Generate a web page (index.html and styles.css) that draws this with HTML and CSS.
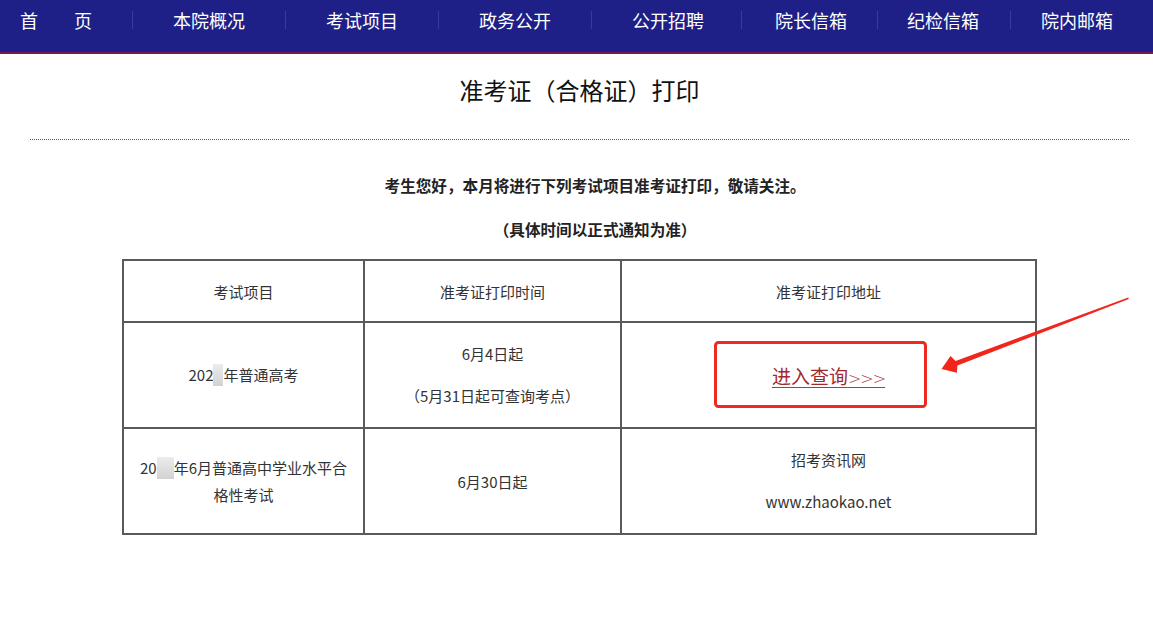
FILE: index.html
```html
<!DOCTYPE html>
<html lang="zh-CN">
<head>
    <meta charset="UTF-8">
    <title>准考证（合格证）打印</title>
    <link rel="stylesheet" href="styles.css">
</head>
<body>
    <div id="nav">
        <ul class="navList">
            <li class="navItem first">首　　页</li>
            <li class="navItem">本院概况</li>
            <li class="navItem">考试项目</li>
            <li class="navItem">政务公开</li>
            <li class="navItem n5">公开招聘</li>
            <li class="navItem n6">院长信箱</li>
            <li class="navItem n7">纪检信箱</li>
            <li class="navItem n8">院内邮箱</li>
        </ul>
    </div>

    <div id="content">
        <h1 class="pageTitle">准考证（合格证）打印</h1>
        <div class="dotLine"></div>

        <p class="notice">考生您好，本月将进行下列考试项目准考证打印，敬请关注。</p>
        <p class="notice">（具体时间以正式通知为准）</p>

        <table class="examTable">
            <tr class="headRow">
                <td class="c1">考试项目</td>
                <td class="c2">准考证打印时间</td>
                <td class="c3">准考证打印地址</td>
            </tr>
            <tr class="bodyRow">
                <td>202<span class="blur"></span>年普通高考</td>
                <td>
                    <p class="cellLine">6月4日起</p>
                    <p class="cellLine">（5月31日起可查询考点）</p>
                </td>
                <td><a class="queryLink" href="#">进入查询<span class="arrows">&gt;&gt;&gt;</span></a></td>
            </tr>
            <tr class="bodyRow">
                <td class="wrapCell">20<span class="blur wide"></span>年6月普通高中学业水平合格性考试</td>
                <td>6月30日起</td>
                <td>
                    <p class="cellLine">招考资讯网</p>
                    <p class="cellLine">www.zhaokao.net</p>
                </td>
            </tr>
        </table>
    </div>

    <!-- screenshot markup: red frame and arrow -->
    <svg class="markup" width="1153" height="621" viewBox="0 0 1153 621">
        <rect x="715.5" y="342.5" width="210" height="64" rx="3" fill="none" stroke="#ec2a20" stroke-width="3"/>
        <polygon fill="#f0261c" points="941.5,369 956.9,372.8 957.4,365.6 1128.8,299 1128.2,297.5 955.6,361 950.5,356"/>
    </svg>
</body>
</html>
```

FILE: styles.css
```css
* {
    margin: 0px;
    padding: 0px;
    border: 0px;
}
body {
    position: relative;
    background-color: #fff;
    font-family: "Noto Sans CJK SC", "Noto Sans", sans-serif;
    color: #222;
    text-spacing-trim: space-all;
}
#nav {
    background-color: #1e2087;
    height: 52px;
    border-bottom: 2px solid #741a4e;
}
.navList {
    list-style: none;
    display: flex;
    padding: 11px 0px 0px 20px;
}
.navItem {
    color: #fff;
    font-size: 18px;
    line-height: 18px;
    height: 18px;
    padding: 0px 40px;
    border-left: 1px solid #3a3c9c;
    white-space: nowrap;
}
.navItem.first {
    padding-left: 0px;
    border-left: 0px;
}
.navItem.n5 {
    padding-right: 37px;
}
.navItem.n6 {
    padding: 0px 30px 0px 33px;
}
.navItem.n7 {
    padding: 0px 31px 0px 29px;
}
.navItem.n8 {
    padding: 0px 0px 0px 30px;
}
#content {
    margin: 0px 24px 0px 30px;
}
.pageTitle {
    margin-top: 21px;
    font-size: 24px;
    line-height: 30px;
    font-weight: normal;
    text-align: center;
    color: #111;
}
.dotLine {
    margin-top: 34px;
    border-top: 1px dotted #555;
}
.notice {
    font-size: 15.6px;
    line-height: 24px;
    font-weight: bold;
    text-align: center;
    text-indent: 2em;
    margin-top: 20px;
}
.notice:first-of-type {
    margin-top: 33px;
}
.examTable {
    margin: 18px auto 0px auto;
    width: 915px;
    border-collapse: collapse;
    border: 2px solid #5a5a5a;
    font-size: 15px;
    color: #333;
}
.examTable td {
    border: 2px solid #5a5a5a;
    text-align: center;
    vertical-align: middle;
    padding: 0px 8px;
}
.headRow td {
    height: 60px;
}
.bodyRow td {
    height: 104px;
}
.c1 {
    width: 223px;
}
.c2 {
    width: 239px;
}
.cellLine {
    line-height: 22px;
}
.cellLine + .cellLine {
    margin-top: 20px;
}
.examTable td.wrapCell {
    line-height: 27px;
    padding: 0px 12px;
}
.blur {
    display: inline-block;
    width: 10px;
    height: 22px;
    vertical-align: -5px;
    background: linear-gradient(#ececec, #d2d2d2);
}
.blur.wide {
    width: 17px;
}
.queryLink {
    color: #a02a2a;
    font-size: 19px;
    text-decoration: underline;
    text-decoration-color: #2a66a8;
    text-underline-offset: 3px;
}
.arrows {
    font-family: "DejaVu Sans", sans-serif;
    font-size: 16px;
    font-weight: 200;
    letter-spacing: -1px;
}
.markup {
    position: absolute;
    top: 0px;
    left: 0px;
    pointer-events: none;
}
```
